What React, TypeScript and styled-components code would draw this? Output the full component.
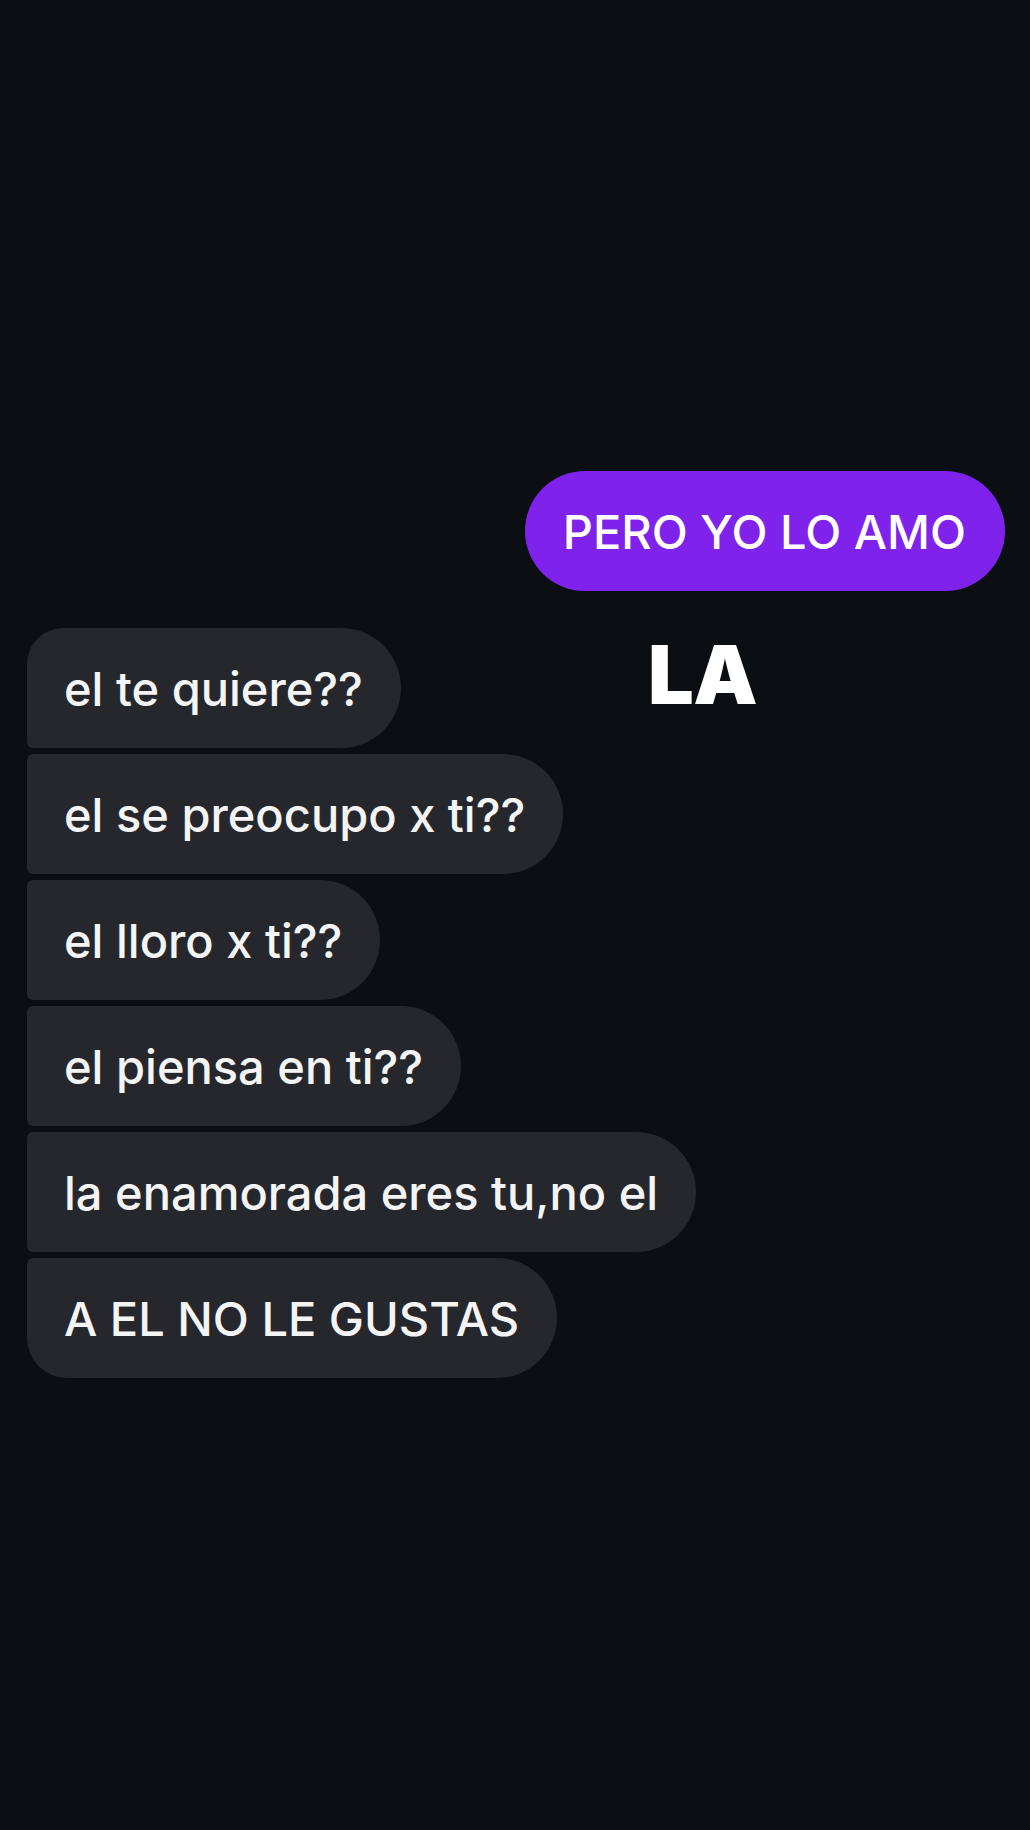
import styled, { createGlobalStyle } from "styled-components";

const GlobalStyle = createGlobalStyle`
  html, body {
    margin: 0;
    padding: 0;
    background: #0b0e13;
  }
  body {
    font-family: Inter, "Noto Sans", sans-serif;
  }
`;

const Screen = styled.div`
  position: relative;
  width: 1030px;
  min-height: 1830px;
  background: #0b0e13;
  padding-top: 471px;
  box-sizing: border-box;
  display: flex;
  flex-direction: column;
`;

const SentRow = styled.div`
  display: flex;
  justify-content: flex-end;
  padding-right: 25px;
`;

const SentBubble = styled.div`
  height: 120px;
  display: flex;
  align-items: center;
  padding: 0 39px 0 38px;
  border-radius: 60px;
  background: #7e22ec;
  color: #ffffff;
  font-size: 47px;
  font-weight: 500;
  white-space: nowrap;
`;

const Sticker = styled.div`
  position: absolute;
  left: 648px;
  top: 635px;
  color: #ffffff;
  font-size: 81px;
  font-weight: 900;
  line-height: 1;
  letter-spacing: -0.5px;
`;

const Thread = styled.div`
  display: flex;
  flex-direction: column;
  align-items: flex-start;
  gap: 6px;
  margin-top: 37px;
  padding-left: 27px;
`;

type Pos = "first" | "middle" | "last";

const ReceivedBubble = styled.div<{ $pos: Pos }>`
  height: 120px;
  display: flex;
  align-items: center;
  padding: 0 38px 0 37px;
  background: #25272c;
  color: #f4f4f5;
  font-size: 47px;
  font-weight: 500;
  white-space: nowrap;
  border-radius: ${({ $pos }) =>
    $pos === "first"
      ? "36px 60px 60px 6px"
      : $pos === "last"
      ? "6px 60px 60px 40px"
      : "6px 60px 60px 6px"};
`;

const messages = [
  "el te quiere??",
  "el se preocupo x ti??",
  "el lloro x ti??",
  "el piensa en ti??",
  "la enamorada eres tu,no el",
  "A EL NO LE GUSTAS",
];

export default function App() {
  return (
    <>
      <GlobalStyle />
      <Screen>
        <SentRow>
          <SentBubble>PERO YO LO AMO</SentBubble>
        </SentRow>
        <Thread>
          {messages.map((m, i) => (
            <ReceivedBubble
              key={i}
              $pos={i === 0 ? "first" : i === messages.length - 1 ? "last" : "middle"}
            >
              {m}
            </ReceivedBubble>
          ))}
        </Thread>
        <Sticker>LA</Sticker>
      </Screen>
    </>
  );
}
